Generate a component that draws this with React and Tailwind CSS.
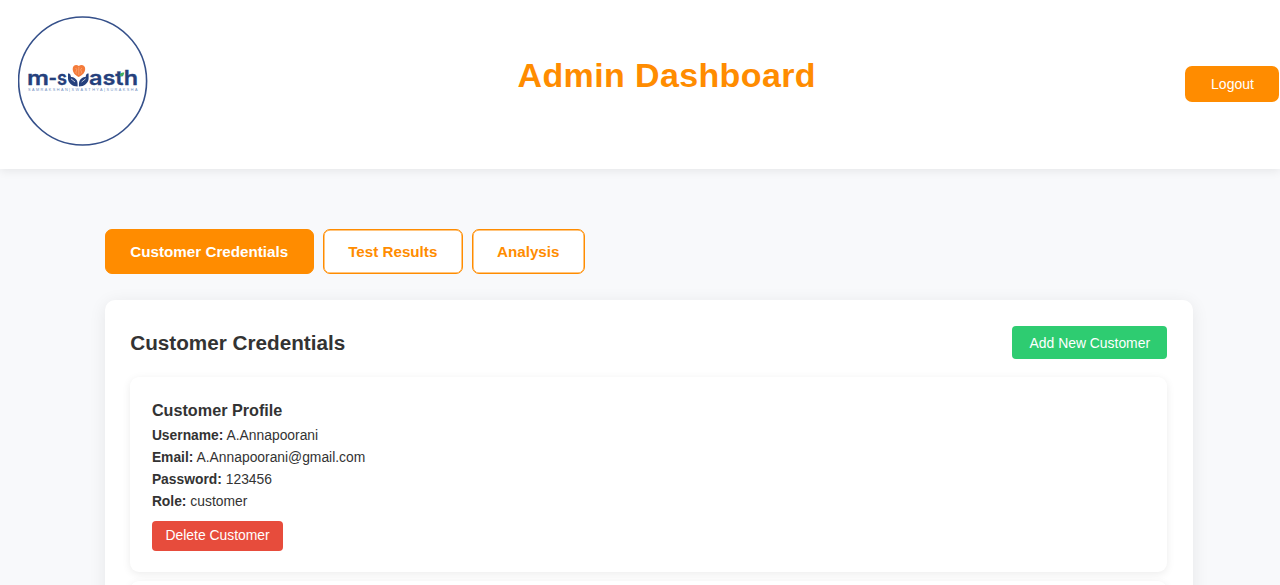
import React from "react";

function Logo() {
  return (
    <svg viewBox="0 0 130 130" className="h-[130px] w-[130px] shrink-0" role="img" aria-label="m-swasth">
      <circle cx="64.6" cy="65" r="64" fill="#fff" stroke="#35508a" strokeWidth="1.6" />
      <g fill="#25407c" stroke="#25407c" strokeWidth="0.3" fontFamily="Inter, sans-serif" fontWeight="600" fontSize="20">
        <text x="9" y="69" textLength="22" lengthAdjust="spacingAndGlyphs">m</text>
        <text x="30.5" y="69" textLength="18.5" lengthAdjust="spacingAndGlyphs">-s</text>
        <text x="71" y="69" textLength="49" lengthAdjust="spacingAndGlyphs">asth</text>
      </g>
      <path d="M60.8 61 C56.5 59 54.7 56 54.7 53 C54.7 49.5 58 48 60.8 50 C63.5 48 67.2 49.5 67.2 53 C67.2 56 65 59 60.8 61Z" fill="#f47b3a" />
      <path d="M60.8 51 V59 M57.5 52 q2 1 1 3 q-1.5 1 0 2.5 M64 52 q-2 1 -1 3 q1.5 1 0 2.5" fill="none" stroke="#ffc19b" strokeWidth="0.5" />
      <path d="M50 57.5 C52 57 52.7 58.8 53 61 C55 60.5 57.5 62.2 58.6 64 C59.6 65.8 59.8 67.5 59.6 70.5 C54.5 70.5 50.2 67 50 62.5Z" fill="#25407c" />
      <path d="M70.6 57.5 C68.6 57 67.9 58.8 67.6 61 C65.6 60.5 63.1 62.2 62 64 C61 65.8 60.8 67.5 61 70.5 C66.1 70.5 70.4 67 70.6 62.5Z" fill="#25407c" />
      <path d="M53 62.8 L57 66 M67.6 62.8 L63.6 66" stroke="#fff" strokeWidth="0.7" />
      <path d="M101.5 60 C102 57 103.8 56.2 106.2 56.6 C106 59.8 104 61 101.5 60Z" fill="#3faf62" />
      <text x="10" y="75.3" fontFamily="Liberation Sans, sans-serif" fontSize="3.8" fill="#6f90c2" textLength="109.5" lengthAdjust="spacing">SAMRAKSHAN|SWASTHYA|SURAKSHA</text>
    </svg>
  );
}

const profile = [
  ["Username:", "A.Annapoorani"],
  ["Email:", "A.Annapoorani@gmail.com"],
  ["Password:", "123456"],
  ["Role:", "customer"],
];

function Tab({ children, active, width }) {
  return (
    <button
      className={
        "h-[45px] rounded-[7px] border border-[#ff8c00] pt-[2px] text-[15.2px] font-bold whitespace-nowrap shadow-[inset_0_0_0_0.5px_#ff8c00] " +
        width +
        (active ? " bg-[#ff8c00] text-white" : " bg-white text-[#ff8c00]")
      }
    >
      {children}
    </button>
  );
}

export default function App() {
  return (
    <div className="h-[585px] overflow-hidden bg-[#f8f9fb] font-['Liberation_Sans',Arial,sans-serif] text-[#333]">
      <header className="flex h-[169px] items-start justify-between bg-white pt-4 pl-[18px] shadow-[0_2px_9px_rgba(0,0,0,0.08)]">
        <Logo />
        <h1 className="mt-[39px] text-[34px] leading-[40px] font-bold tracking-[0.37px] whitespace-nowrap text-[#ff8c00]">
          Admin Dashboard
        </h1>
        <button className="mt-[50px] mr-[0.5px] h-[36px] w-[94px] rounded-[7px] bg-[#ff8c00] text-[14px] text-white">
          Logout
        </button>
      </header>

      <main className="ml-[104.5px] w-[1088.5px] pt-[60.4px]">
        <nav className="flex gap-[8.5px]">
          <Tab active width="w-[209.5px]">Customer Credentials</Tab>
          <Tab width="w-[140.5px]">Test Results</Tab>
          <Tab width="w-[113.5px]">Analysis</Tab>
        </nav>

        <section className="mt-[26.1px] h-[420px] rounded-[10px] bg-white px-[25.7px] pt-[25.5px] shadow-[0_3px_17px_rgba(0,0,0,0.08)]">
          <div className="flex h-[33px] items-center justify-between">
            <h2 className="text-[20.7px] leading-[33px] font-bold">Customer Credentials</h2>
            <button className="h-[33px] w-[155px] rounded-[4px] bg-[#2ecc71] pt-px text-[13.9px] text-white">
              Add New Customer
            </button>
          </div>

          <article className="mt-[18px] h-[195px] rounded-[9px] bg-white px-[21.7px] pt-[21px] shadow-[0_2px_9px_rgba(0,0,0,0.08)]">
            <h3 className="text-[16.2px] leading-[24px] font-bold">Customer Profile</h3>
            <div className="mt-[2px]">
              {profile.map(([label, value]) => (
                <p key={label} className="text-[13.85px] leading-[22px]">
                  <strong>{label}</strong> {value}
                </p>
              ))}
            </div>
            <button className="mt-[9px] block h-[30px] w-[131.5px] rounded-[4px] bg-[#e74c3c] pb-px text-[13.9px] text-white">
              Delete Customer
            </button>
          </article>
          <article className="mt-[9px] h-[195px] rounded-[9px] bg-white shadow-[0_2px_9px_rgba(0,0,0,0.08)]" />
        </section>
      </main>
    </div>
  );
}
